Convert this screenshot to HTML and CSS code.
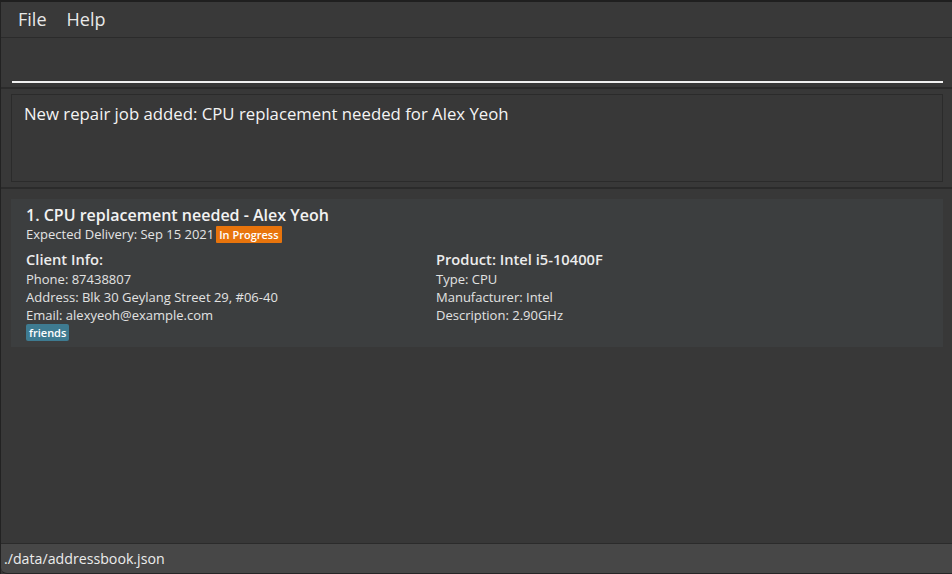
FILE: index.html
```html
<!DOCTYPE html>
<html>
<head>
<meta charset="utf-8">
<link rel="stylesheet" href="styles.css">
</head>
<body>
<div class="window">
  <div class="menubar">
    <span class="menu">File</span>
    <span class="menu">Help</span>
  </div>
  <div class="command">
    <div class="command-input"></div>
  </div>
  <div class="result">
    <div class="result-box">New repair job added: CPU replacement needed for Alex Yeoh</div>
  </div>
  <div class="list">
    <div class="card">
      <div class="title">1. CPU replacement needed - Alex Yeoh</div>
      <div class="delivery">Expected Delivery: Sep 15 2021 <span class="status">In Progress</span></div>
      <div class="cols">
        <div class="col">
          <div class="heading">Client Info:</div>
          <div class="small">Phone: 87438807</div>
          <div class="small">Address: Blk 30 Geylang Street 29, #06-40</div>
          <div class="small">Email: alexyeoh@example.com</div>
          <div class="tags"><span class="tag">friends</span></div>
        </div>
        <div class="col">
          <div class="heading">Product: Intel i5-10400F</div>
          <div class="small">Type: CPU</div>
          <div class="small">Manufacturer: Intel</div>
          <div class="small">Description: 2.90GHz</div>
        </div>
      </div>
    </div>
  </div>
  <div class="statusbar">./data/addressbook.json</div>
</div>
</body>
</html>
```
FILE: styles.css
```css
html, body {
  margin: 0;
  padding: 0;
  background: #383838;
  font-family: "Open Sans", "Noto Sans", sans-serif;
  color: #ffffff;
}
.window {
  width: 952px;
  height: 574px;
  box-sizing: border-box;
  border-top: 2px solid #1f1f1f;
  border-left: 1px solid #222222;
  background: #383838;
  display: flex;
  flex-direction: column;
  overflow: hidden;
}
.menubar {
  height: 35px;
  border-bottom: 1px solid #2b2b2b;
  display: flex;
  align-items: center;
  padding-left: 17px;
  gap: 20px;
  background: #393939;
}
.menu {
  font-size: 18px;
  color: #e8e8e8;
  line-height: 1;
  padding-bottom: 2px;
}
.command {
  height: 49px;
  border-bottom: 2px solid #2b2b2b;
  padding: 0 9px 0 11px;
  display: flex;
  flex-direction: column;
  justify-content: flex-end;
}
.command-input {
  height: 1px;
  border-bottom: 2px solid #f2f2f2;
  margin-bottom: 4px;
}
.result {
  height: 100px;
  border-bottom: 2px solid #2b2b2b;
  box-sizing: border-box;
  padding: 5px 9px 5px 10px;
}
.result-box {
  height: 88px;
  box-sizing: border-box;
  border: 1px solid #2b2b2b;
  padding: 7px 12px;
  font-size: 16.75px;
  color: #f4f4f4;
  line-height: 24px;
}
.list {
  flex: 1;
  padding: 10px 9px 0 10px;
}
.card {
  background: #3c3e3f;
  padding: 6px 15px 5px 15px;
  height: 148px;
  box-sizing: border-box;
}
.title {
  font-size: 16px;
  font-weight: 600;
  color: #f2f2f2;
  line-height: 20px;
}
.delivery {
  font-size: 13px;
  color: #e4e4e4;
  line-height: 18px;
  display: flex;
  align-items: center;
  gap: 2px;
}
.status {
  background: #e8740c;
  color: #ffffff;
  font-size: 11px;
  font-weight: 600;
  padding: 0 3px;
  line-height: 17px;
  border-radius: 1px;
}
.cols {
  display: grid;
  grid-template-columns: 410px 1fr;
  margin-top: 6px;
}
.heading {
  font-size: 14.7px;
  font-weight: 600;
  color: #ececec;
  line-height: 21px;
}
.small {
  font-size: 13px;
  color: #e2e2e2;
  line-height: 18px;
}
.tags {
  display: flex;
}
.tag {
  background: #3e7b91;
  color: #ffffff;
  font-size: 11px;
  font-weight: 600;
  padding: 0 3px;
  line-height: 17px;
  border-radius: 2px;
}
.statusbar {
  height: 29px;
  border-top: 1px solid #2b2b2b;
  border-bottom: 1px solid #262626;
  background: #474747;
  border-bottom-left-radius: 6px;
  font-size: 14.2px;
  color: #ececec;
  padding-left: 3px;
  display: flex;
  align-items: center;
  box-sizing: content-box;
}
```
